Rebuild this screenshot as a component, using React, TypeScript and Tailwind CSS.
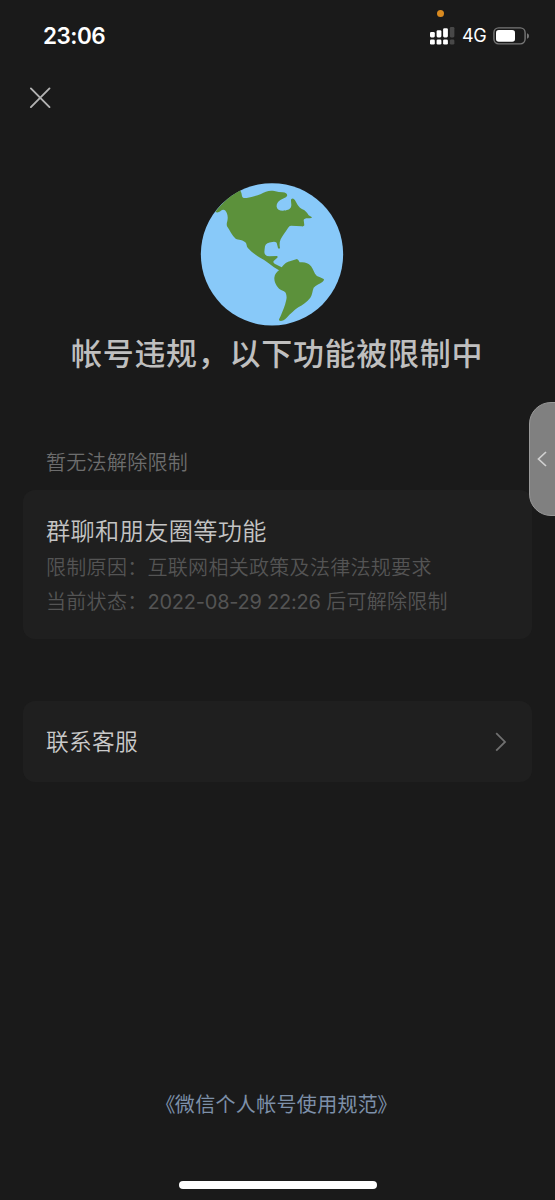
import React from "react";

function StatusBar() {
  return (
    <header className="relative flex h-[72px] shrink-0 items-center justify-between pl-[43px] pr-[25px]">
      <time className="font-['Inter'] text-[22.5px] leading-7 font-semibold tracking-[-0.5px] text-white">23:06</time>
      <span className="absolute top-[10px] left-[437px] size-[7px] rounded-full bg-[#d98a20]" />
      <div className="flex items-center">
        <svg className="h-[18px] w-[25px]" viewBox="0 0 25 18" fill="white">
          <rect x="0" y="5" width="4.8" height="5.4" rx="1.3" />
          <rect x="6.6" y="3.2" width="4.8" height="7.2" rx="1.3" />
          <rect x="13.1" y="1.2" width="4.8" height="9.2" rx="1.3" />
          <rect x="19.8" y="0" width="4.6" height="10.4" rx="1.3" fill="#484848" />
          <rect x="0" y="12.4" width="4.8" height="5.1" rx="1.3" />
          <rect x="6.6" y="12.4" width="4.8" height="5.1" rx="1.3" />
          <rect x="13.1" y="12.4" width="4.8" height="5.1" rx="1.3" />
          <rect x="19.8" y="12.4" width="4.6" height="5.1" rx="1.3" fill="#484848" />
        </svg>
        <span className="ml-[7px] w-[31px] font-['Inter'] text-[18px] leading-6 tracking-[-0.3px] text-white">4G</span>
        <svg className="h-[18px] w-[37px]" viewBox="0 0 37 18">
          <rect x="0.9" y="0.9" width="31.2" height="16" rx="4.8" fill="none" stroke="#777" strokeWidth="1.4" />
          <rect x="3" y="3" width="19" height="11.8" rx="2.8" fill="white" />
          <path d="M34 6.2c2.7.9 2.7 4.6 0 5.5Z" fill="#777" />
        </svg>
      </div>
    </header>
  );
}

function Globe() {
  return (
    <svg className="h-[160px] w-[165px]" viewBox="0 0 495 480">
      <circle cx="246" cy="238" r="213.5" fill="#88c9f9" />
      <g fill="#5c913b">
        <path d="M76 111C97 83 121 62 151 46.5Q154 51 156 63C157 69 163 70 170 69C186 65 201 62 213 57C225 49 239 45 253 48Q267 52 278 52C288 53 293 57 291 63C288 69 279 70 271 75C263 80 259 88 260 95C261 103 268 107 278 107C290 107 301 103 303 96C306 87 301 78 304 72Q310 67 315 76C320 84 323 92 330 98C336 103 342 103 345 107Q351 112 356 121L366 127Q365 130 359 130C350 129 342 130 341 135L343 151Q341 155 335 154L303 152Q298 152 294 159C286 171 278 181 272 193Q267 204 270 219Q267 223 264 219L260 203Q255 199 247 201C235 202 227 206 225 214C224 223 221 233 226 239Q230 244 238 244L261 243Q265 246 261 249L251 258Q248 263 255 267L275 277Q286 261 302 258L321 252Q326 255 329 262C339 262 350 263 357 268C367 275 370 287 375 296Q379 304 390 307L401 312Q404 315 397 321C391 327 377 330 371 338C367 348 367 359 361 368C351 382 338 389 325 397C312 406 301 417 290 428C281 437 272 440 267 436Q266 434 272 423C278 408 285 393 288 378C291 369 290 360 287 353Q283 348 275 346C263 341 252 324 253 308Q255 294 267 286L252 277L235 264Q225 256 213 250C197 241 182 228 173 218C169 214 171 207 166 202C157 193 146 195 137 191C126 182 119 165 111 154Q109 147 112 138C115 126 112 113 105 106Q99 102 91 109Q84 114 76 111Z" />
      </g>
    </svg>
  );
}

export default function App() {
  return (
    <div className="relative flex h-[1200px] w-[555px] flex-col overflow-hidden bg-[#1a1a1a] font-['Inter','Noto_Sans_CJK_SC',sans-serif]">
      <StatusBar />
      <nav className="flex h-[103px] shrink-0 items-start pt-[15px] pl-[29px]">
        <button aria-label="关闭" className="size-[22px]">
          <svg viewBox="0 0 22 22" fill="none" stroke="#b3b3b3" strokeWidth="1.9" strokeLinecap="round">
            <path d="M1.9 1.4 20.5 20.1M20.5 1.4 1.9 20.1" />
          </svg>
        </button>
      </nav>
      <main className="flex flex-col px-[23px]">
        <div className="pl-[167px]">
          <Globe />
        </div>
        <h1 className="h-[38px] pl-[48px] font-['Noto_Sans_CJK_SC',sans-serif] text-[31px] leading-[34px] font-medium tracking-[0.7px] whitespace-nowrap text-[#bfbfbf]">
          帐号违规，以下功能被限制中
        </h1>
        <p className="mt-[75px] h-[42px] pl-[23px] text-[20px] leading-[30px] font-[350] tracking-[0.3px] text-[#6d6d6d]">
          暂无法解除限制
        </p>
        <section className="flex h-[149px] flex-col rounded-[12px] bg-[#1f1f1f] px-[23px] pt-[23px]">
          <h2 className="text-[24.2px] leading-[38px] font-[350] tracking-[0.35px] text-[#c4c4c4]">群聊和朋友圈等功能</h2>
          <p className="text-[20px] leading-[34px] font-[350] tracking-[0.3px] whitespace-nowrap text-[#545454]">
            限制原因：互联网相关政策及法律法规要求
          </p>
          <p className="text-[20px] leading-[34px] font-[350] tracking-[0.3px] whitespace-nowrap text-[#545454]">
            当前状态：<span className="font-normal tracking-[-0.23px]">2022-08-29 22:26 </span>后可解除限制
          </p>
        </section>
        <button className="mt-[62px] flex h-[81px] items-center justify-between rounded-[12px] bg-[#1f1f1f] pr-[25px] pl-[23px]">
          <span className="pt-[2px] text-[22.7px] font-[350] tracking-[0.35px] text-[#cacaca]">联系客服</span>
          <svg className="h-[20px] w-[12px]" viewBox="0 0 12 20" fill="none" stroke="#707070" strokeWidth="1.8">
            <path d="m1.2 1.2 8.8 8.7-8.8 8.8" />
          </svg>
        </button>
      </main>
      <footer className="mt-auto flex h-[112px] shrink-0 flex-col items-center justify-between pb-[11px]">
        <a className="pr-[2px] font-['Noto_Sans_CJK_SC',sans-serif] text-[20px] leading-[31px] tracking-[0.33px] text-[#7d90a9]">
          <span className="-mr-px ml-px">《</span>微信个人帐号使用规范<span className="-ml-px mr-px">》</span>
        </a>
        <div className="h-[8px] w-[198px] rounded-full bg-white" />
      </footer>
      <aside className="absolute top-[402px] left-[529px] flex h-[114px] w-[48px] items-center rounded-[22px] border border-[#999] bg-[#808080] pl-[7px]">
        <svg className="h-[16px] w-[10px]" viewBox="0 0 10 16" fill="none" stroke="#d0d0d0" strokeWidth="1.7">
          <path d="M9 1 1.5 8 9 15" />
        </svg>
      </aside>
    </div>
  );
}
